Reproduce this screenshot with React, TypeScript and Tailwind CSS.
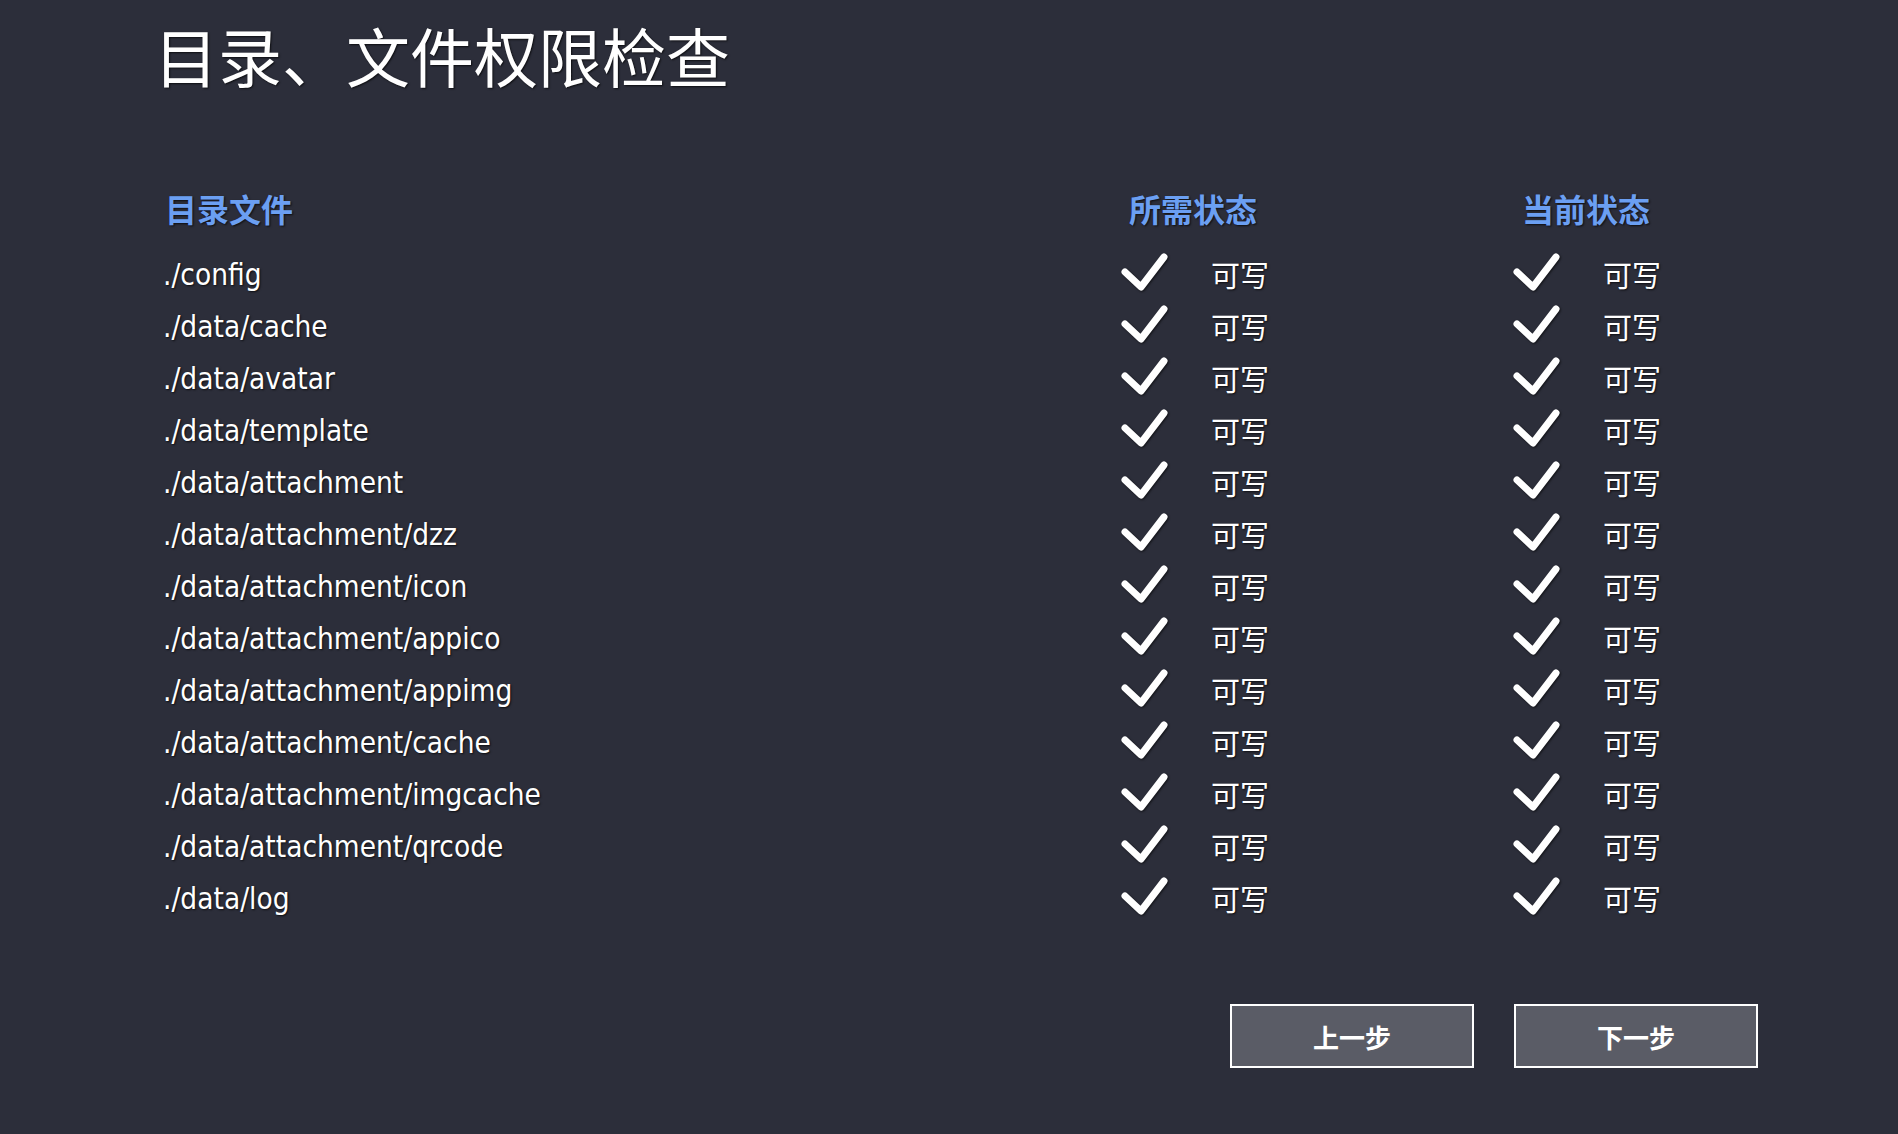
import React from 'react';

const paths = [
  './config',
  './data/cache',
  './data/avatar',
  './data/template',
  './data/attachment',
  './data/attachment/dzz',
  './data/attachment/icon',
  './data/attachment/appico',
  './data/attachment/appimg',
  './data/attachment/cache',
  './data/attachment/imgcache',
  './data/attachment/qrcode',
  './data/log',
];

const Check = () => (
  <svg width="48" height="42" viewBox="0 0 48 42" className="shrink-0 -mt-[6px] [filter:blur(0.5px)_drop-shadow(1px_1px_1px_rgba(0,0,0,0.6))]">
    <path d="M5 21 L21 36 L44 6" fill="none" stroke="#ffffff" strokeWidth="7" strokeLinecap="round" strokeLinejoin="round" />
  </svg>
);

const Status = () => (
  <div className="flex items-center">
    <Check />
    <span className="ml-[43px] pb-[2px] text-[29px] leading-none text-white font-['Noto_Sans_CJK_SC',sans-serif]">可写</span>
  </div>
);

const App = () => {
  return (
    <div className="min-h-screen bg-[#2c2e3a] pl-[161px] pr-[140px] font-['DejaVu_Sans_Condensed','Noto_Sans','Noto_Sans_CJK_SC',sans-serif] [text-shadow:1px_1px_2px_rgba(0,0,0,0.7)]">
      <h1 className="pt-[22px] -ml-[7px] text-[64px] leading-none text-white font-normal font-['Noto_Sans_CJK_SC',sans-serif]">
        目录、文件权限检查
      </h1>

      <div className="mt-[96px] pl-[5px]">
        <div className="grid grid-cols-[954px_392px_1fr] h-[52px] items-center text-[32px] font-bold text-[#6b9ff2] font-['Noto_Sans_CJK_SC',sans-serif]">
          <div className="-ml-[1px]">目录文件</div>
          <div className="pl-[9px]">所需状态</div>
          <div className="pl-[10px]">当前状态</div>
        </div>

        <div className="mt-[15px]">
          {paths.map((p) => (
            <div key={p} className="grid grid-cols-[954px_392px_1fr] h-[52px] items-center">
              <div className="-ml-[3px] pt-[2px] text-[29.5px] leading-none text-white">{p}</div>
              <Status />
              <Status />
            </div>
          ))}
        </div>
      </div>

      <div className="mt-[79px] flex justify-end gap-[40px]">
        <button className="w-[244px] h-[64px] border-2 border-white bg-[#5a5c66] text-white text-[26px] font-bold font-['Noto_Sans_CJK_SC',sans-serif]">
          上一步
        </button>
        <button className="w-[244px] h-[64px] border-2 border-white bg-[#5a5c66] text-white text-[26px] font-bold font-['Noto_Sans_CJK_SC',sans-serif]">
          下一步
        </button>
      </div>
    </div>
  );
};

export default App;
